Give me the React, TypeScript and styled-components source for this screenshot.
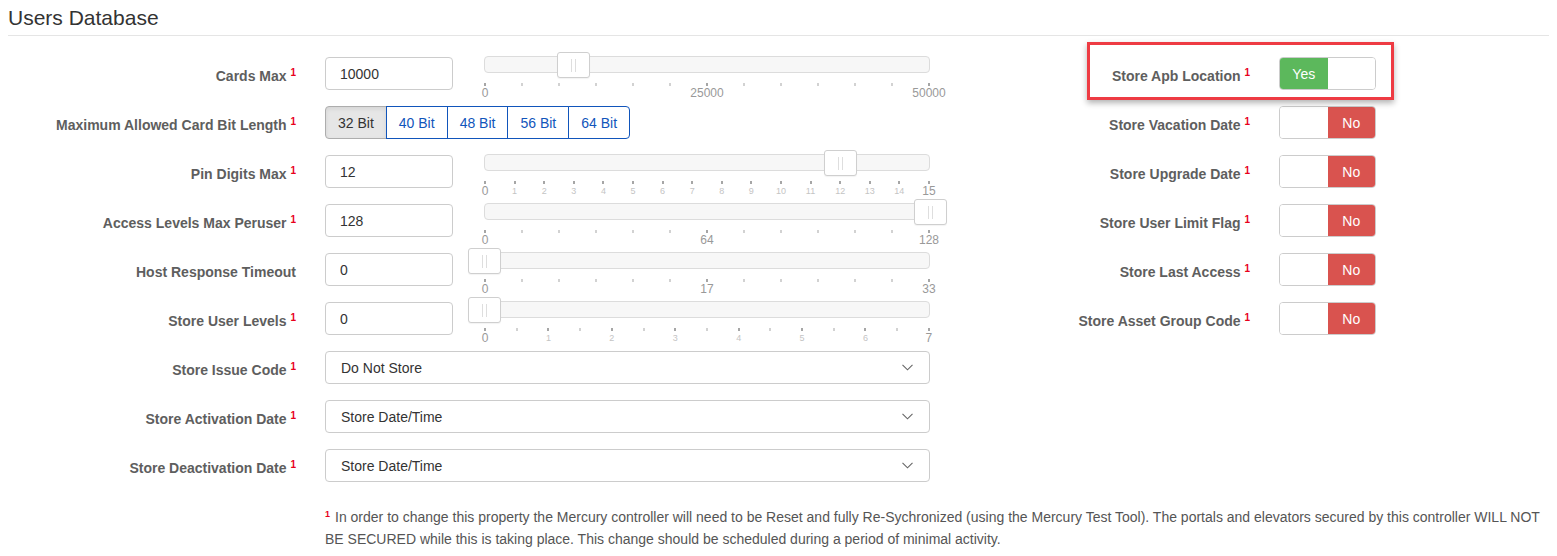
import React from 'react';
import styled, { createGlobalStyle } from 'styled-components';

const GlobalStyle = createGlobalStyle`
  html, body {
    margin: 0;
    padding: 0;
    background: #fff;
  }
  body {
    font-family: 'Liberation Sans', Arial, sans-serif;
    font-size: 14px;
    color: #333;
  }
  * {
    box-sizing: border-box;
  }
`;

interface TickLabel {
  at: number;
  text: string;
  minor?: boolean;
}

interface SliderSpec {
  min: number;
  max: number;
  value: number;
  ticks: number;
  labels: TickLabel[];
}

const range = (n: number) => Array.from({ length: n }, (_, i) => i);

const pinLabels: TickLabel[] = range(16).map((i) => ({ at: i, text: String(i), minor: i > 0 && i < 15 }));
const levelLabels: TickLabel[] = range(8).map((i) => ({ at: i * 2, text: String(i), minor: i > 0 && i < 7 }));

const numberRows: { label: string; mark: boolean; value: string; slider: SliderSpec }[] = [
  {
    label: 'Cards Max',
    mark: true,
    value: '10000',
    slider: {
      min: 0,
      max: 50000,
      value: 10000,
      ticks: 13,
      labels: [
        { at: 0, text: '0' },
        { at: 6, text: '25000' },
        { at: 12, text: '50000' },
      ],
    },
  },
  {
    label: 'Pin Digits Max',
    mark: true,
    value: '12',
    slider: { min: 0, max: 15, value: 12, ticks: 16, labels: pinLabels },
  },
  {
    label: 'Access Levels Max Peruser',
    mark: true,
    value: '128',
    slider: {
      min: 0,
      max: 128,
      value: 128,
      ticks: 13,
      labels: [
        { at: 0, text: '0' },
        { at: 6, text: '64' },
        { at: 12, text: '128' },
      ],
    },
  },
  {
    label: 'Host Response Timeout',
    mark: false,
    value: '0',
    slider: {
      min: 0,
      max: 33,
      value: 0,
      ticks: 13,
      labels: [
        { at: 0, text: '0' },
        { at: 6, text: '17' },
        { at: 12, text: '33' },
      ],
    },
  },
  {
    label: 'Store User Levels',
    mark: true,
    value: '0',
    slider: { min: 0, max: 7, value: 0, ticks: 15, labels: levelLabels },
  },
];

const selectRows = [
  { label: 'Store Issue Code', value: 'Do Not Store' },
  { label: 'Store Activation Date', value: 'Store Date/Time' },
  { label: 'Store Deactivation Date', value: 'Store Date/Time' },
];

const toggleRows = [
  { label: 'Store Apb Location', on: true },
  { label: 'Store Vacation Date', on: false },
  { label: 'Store Upgrade Date', on: false },
  { label: 'Store User Limit Flag', on: false },
  { label: 'Store Last Access', on: false },
  { label: 'Store Asset Group Code', on: false },
];

const bitOptions = ['32 Bit', '40 Bit', '48 Bit', '56 Bit', '64 Bit'];

const Page = styled.div`
  padding: 6px 8px 0;
`;

const Title = styled.h3`
  margin: 0;
  padding-bottom: 6px;
  font-size: 21px;
  font-weight: normal;
  line-height: 23px;
  color: #333;
  border-bottom: 1px solid #e5e5e5;
`;

const Columns = styled.div`
  display: flex;
  gap: 70px;
  margin-top: 21px;
`;

const LeftCol = styled.div`
  width: 922px;
  display: flex;
  flex-direction: column;
  gap: 16px;
`;

const RightCol = styled.div`
  position: relative;
  display: flex;
  flex-direction: column;
  gap: 16px;
`;

const Row = styled.div<{ $labelWidth: number; $controlWidth?: number }>`
  display: grid;
  grid-template-columns: ${(p) => p.$labelWidth}px ${(p) => (p.$controlWidth ? `${p.$controlWidth}px` : '1fr')};
  column-gap: 29px;
  height: 33px;
`;

const Label = styled.label`
  padding-top: 9px;
  text-align: right;
  font-size: 14px;
  font-weight: bold;
  line-height: 20px;
  color: #5e5e5e;
  white-space: nowrap;
`;

const Mark = styled.sup`
  position: relative;
  top: -5px;
  vertical-align: baseline;
  font-size: 10px;
  font-weight: bold;
  line-height: 0;
  color: #e8001c;
`;

const Controls = styled.div`
  display: flex;
  align-items: flex-start;
  gap: 31px;
`;

const NumberInput = styled.input`
  width: 128px;
  height: 33px;
  padding: 0 14px;
  border: 1px solid #ccc;
  border-radius: 4px;
  font-family: inherit;
  font-size: 14px;
  color: #333;
  outline: none;
`;

const SliderBox = styled.div`
  position: relative;
  width: 446px;
  height: 33px;
`;

const Track = styled.div`
  height: 17px;
  margin-top: -1px;
  background: #f7f7f7;
  border: 1px solid #dcdcdc;
  border-radius: 4px;
`;

const Handle = styled.div`
  position: absolute;
  top: -5px;
  width: 33px;
  height: 26px;
  margin-left: -16.5px;
  background: #fff;
  border: 1px solid #cfcfcf;
  border-radius: 3px;
  box-shadow: 0 1px 1px rgba(0, 0, 0, 0.05);
  display: flex;
  justify-content: center;
  align-items: center;
  gap: 3px;

  &::before,
  &::after {
    content: '';
    width: 1px;
    height: 13px;
    background: #dedede;
  }
`;

const TickRow = styled.div`
  display: flex;
  justify-content: space-between;
  margin-top: 10px;
`;

const Tick = styled.span<{ $major: boolean }>`
  width: 2px;
  height: 3px;
  background: ${(p) => (p.$major ? '#a6a6a6' : '#d2d2d2')};
`;

const LabelRow = styled.div`
  display: flex;
  justify-content: space-between;
  align-items: center;
  margin-top: 1px;
  height: 12px;
`;

const TickText = styled.span<{ $minor?: boolean }>`
  width: 2px;
  display: flex;
  justify-content: center;
  white-space: nowrap;
  font-size: ${(p) => (p.$minor ? '9px' : '12px')};
  line-height: 12px;
  color: ${(p) => (p.$minor ? '#c4c4c4' : '#999')};
`;

const ButtonGroup = styled.div`
  display: flex;
`;

const GroupButton = styled.button<{ $active?: boolean }>`
  height: 33px;
  padding: 0 12px;
  margin-left: -1px;
  font-family: inherit;
  font-size: 14px;
  color: ${(p) => (p.$active ? '#333' : '#1155bb')};
  background: ${(p) => (p.$active ? '#e6e6e6' : '#fff')};
  border: 1px solid ${(p) => (p.$active ? '#adadad' : '#1155bb')};
  border-radius: 0;
  box-shadow: ${(p) => (p.$active ? 'inset 0 2px 4px rgba(0, 0, 0, 0.08)' : 'none')};
  cursor: pointer;

  &:first-child {
    margin-left: 0;
    border-radius: 4px 0 0 4px;
  }
  &:last-child {
    border-radius: 0 4px 4px 0;
  }
`;

const Select = styled.div`
  width: 605px;
  height: 33px;
  display: flex;
  align-items: center;
  justify-content: space-between;
  padding: 0 16px 0 15px;
  border: 1px solid #ccc;
  border-radius: 4px;
  font-size: 14px;
  color: #333;
`;

const Toggle = styled.div`
  width: 97px;
  height: 33px;
  display: flex;
  border: 1px solid #ccc;
  border-radius: 4px;
  overflow: hidden;
`;

const ToggleHalf = styled.span<{ $tone?: 'yes' | 'no' }>`
  flex: 1;
  display: flex;
  align-items: center;
  justify-content: center;
  font-size: 14px;
  color: #fff;
  background: ${(p) => (p.$tone === 'yes' ? '#5cb85c' : p.$tone === 'no' ? '#d9534f' : '#fff')};
`;

const Highlight = styled.div`
  position: absolute;
  left: 87px;
  top: -15px;
  width: 307px;
  height: 58px;
  border: 3px solid #ee3b43;
  box-shadow: 0 3px 6px rgba(0, 0, 0, 0.3);
  pointer-events: none;
`;

// the red "1" is drawn as the note's lead-in so the wrapped text lines don't sit over it
const Footnote = styled.p`
  margin: 24px 0 0 317px;
  padding-right: 4px;
  font-size: 14px;
  line-height: 22px;
  color: #555;

  &::before {
    content: '1';
    display: inline-block;
    margin-right: 5px;
    vertical-align: 5px;
    font-size: 9px;
    font-weight: bold;
    line-height: 9px;
    color: #e8001c;
  }
`;

const Chevron = () => (
  <svg width="11" height="7" viewBox="0 0 11 7">
    <polyline points="0.5,0.8 5.5,5.8 10.5,0.8" fill="none" stroke="#666" strokeWidth="1.1" />
  </svg>
);

const Slider: React.FC<{ spec: SliderSpec }> = ({ spec }) => {
  const pct = ((spec.value - spec.min) / (spec.max - spec.min)) * 100;
  const byTick = new Map(spec.labels.map((l) => [l.at, l]));
  return (
    <SliderBox>
      <Track />
      <Handle style={{ left: `${pct}%` }} />
      <TickRow>
        {range(spec.ticks).map((i) => (
          <Tick key={i} $major={byTick.has(i)} />
        ))}
      </TickRow>
      <LabelRow>
        {range(spec.ticks).map((i) => {
          const l = byTick.get(i);
          return (
            <TickText key={i} $minor={l?.minor}>
              {l ? l.text : ''}
            </TickText>
          );
        })}
      </LabelRow>
    </SliderBox>
  );
};

const LabelText: React.FC<{ text: string; mark?: boolean }> = ({ text, mark }) => (
  <Label>
    {text}
    {mark && (
      <>
        {' '}
        <Mark>1</Mark>
      </>
    )}
  </Label>
);

const App: React.FC = () => {
  const [first, ...restNumbers] = numberRows;
  return (
    <Page>
      <GlobalStyle />
      <Title>Users Database</Title>
      <Columns>
        <LeftCol>
          <Row $labelWidth={288}>
            <LabelText text={first.label} mark={first.mark} />
            <Controls>
              <NumberInput readOnly value={first.value} />
              <Slider spec={first.slider} />
            </Controls>
          </Row>
          <Row $labelWidth={288}>
            <LabelText text="Maximum Allowed Card Bit Length" mark />
            <ButtonGroup>
              {bitOptions.map((b, i) => (
                <GroupButton key={b} $active={i === 0}>
                  {b}
                </GroupButton>
              ))}
            </ButtonGroup>
          </Row>
          {restNumbers.map((r) => (
            <Row key={r.label} $labelWidth={288}>
              <LabelText text={r.label} mark={r.mark} />
              <Controls>
                <NumberInput readOnly value={r.value} />
                <Slider spec={r.slider} />
              </Controls>
            </Row>
          ))}
          {selectRows.map((r) => (
            <Row key={r.label} $labelWidth={288}>
              <LabelText text={r.label} mark />
              <Select>
                <span>{r.value}</span>
                <Chevron />
              </Select>
            </Row>
          ))}
        </LeftCol>

        <RightCol>
          {toggleRows.map((t) => (
            <Row key={t.label} $labelWidth={250} $controlWidth={97}>
              <LabelText text={t.label} mark />
              <Toggle>
                {t.on ? (
                  <>
                    <ToggleHalf $tone="yes">Yes</ToggleHalf>
                    <ToggleHalf />
                  </>
                ) : (
                  <>
                    <ToggleHalf />
                    <ToggleHalf $tone="no">No</ToggleHalf>
                  </>
                )}
              </Toggle>
            </Row>
          ))}
          <Highlight />
        </RightCol>
      </Columns>

      <Footnote>
        In order to change this property the Mercury controller will need to be Reset and fully Re-Sychronized (using
        the Mercury Test Tool). The portals and elevators secured by this controller WILL NOT BE SECURED while this is
        taking place. This change should be scheduled during a period of minimal activity.
      </Footnote>
    </Page>
  );
};

export default App;
